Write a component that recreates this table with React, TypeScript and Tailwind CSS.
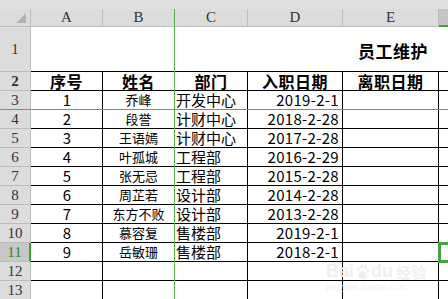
import React from 'react';

type Emp = { no: string; name: string; dept: string; date: string };

const rows: Emp[] = [
  { no: '1', name: '乔峰', dept: '开发中心', date: '2019-2-1' },
  { no: '2', name: '段誉', dept: '计财中心', date: '2018-2-28' },
  { no: '3', name: '王语嫣', dept: '计财中心', date: '2017-2-28' },
  { no: '4', name: '叶孤城', dept: '工程部', date: '2016-2-29' },
  { no: '5', name: '张无忌', dept: '工程部', date: '2015-2-28' },
  { no: '6', name: '周芷若', dept: '设计部', date: '2014-2-28' },
  { no: '7', name: '东方不败', dept: '设计部', date: '2013-2-28' },
  { no: '8', name: '慕容复', dept: '售楼部', date: '2019-2-1' },
  { no: '9', name: '岳敏珊', dept: '售楼部', date: '2018-2-1' },
];

const grid = 'grid grid-cols-[31px_72px_72px_73px_95px_96px_1fr]';
const cjk = "font-['Noto_Sans_CJK_SC',sans-serif]";
const cell = 'border-r border-b border-black overflow-hidden whitespace-nowrap';

const RowHead = ({ n, active = false }: { n: number; active?: boolean }) => (
  <div
    className={`flex items-center justify-center font-['Liberation_Serif',serif] text-[15px] leading-none border-b border-[#bdbdbd] ${
      active
        ? 'bg-[#c8c8c8] text-[#1f8a1f] border-r-2 border-r-[#3f9f3f]'
        : 'bg-[#dcdcdc] text-[#333] border-r border-r-[#bdbdbd]'
    }`}
  >
    {n}
  </div>
);

export default function App() {
  return (
    <div className="relative w-[448px] h-[299px] overflow-hidden bg-white">
      {/* strip above headers */}
      <div className="h-[9px] bg-[#e0e0e0]" />

      {/* column headers */}
      <div className={`${grid} h-[18px] font-['Liberation_Serif',serif] text-[15px] text-[#333] leading-none`}>
        <div className="relative bg-[#dcdcdc] border-r border-b border-[#bdbdbd]">
          <div className="absolute right-[4px] bottom-[3px] w-0 h-0 border-l-[10px] border-l-transparent border-b-[10px] border-b-[#b2b2b2]" />
        </div>
        {['A', 'B', 'C', 'D', 'E'].map((c) => (
          <div key={c} className="flex items-center justify-center bg-[#dcdcdc] border-r border-b border-[#bdbdbd]">
            {c}
          </div>
        ))}
        <div className="bg-[#c6c6c6] border-b-2 border-[#3f9f3f]" />
      </div>

      {/* row 1: title */}
      <div className={`${grid} h-[45px]`}>
        <RowHead n={1} />
        <div className="col-span-6 flex items-center justify-end pr-[20px] pt-[3px] border-b border-black">
          <span className={`${cjk} font-bold text-[17px] text-black tracking-[0.5px]`}>员工维护</span>
        </div>
      </div>

      {/* row 2: column titles */}
      <div className={`${grid} h-[19px] ${cjk} font-bold text-[16px] leading-[18px] text-black`}>
        <RowHead n={2} />
        {['序号', '姓名', '部门', '入职日期', '离职日期'].map((t) => (
          <div key={t} className={`${cell} flex items-end justify-center tracking-[0.5px]`}>
            {t}
          </div>
        ))}
        <div className="border-b border-black" />
      </div>

      {/* data rows */}
      {rows.map((r, i) => (
        <div key={r.no} className={`${grid} h-[19px] ${cjk} leading-[18px] text-black`}>
          <RowHead n={i + 3} active={i + 3 === 11} />
          <div className={`${cell} flex items-end justify-center text-[15px] pl-[1px]`}>{r.no}</div>
          <div className={`${cell} flex items-end justify-center text-[13px]`}>{r.name}</div>
          <div className={`${cell} flex items-end justify-start pl-[1px] text-[15px]`}>{r.dept}</div>
          <div className={`${cell} flex items-end justify-end pr-[3px] text-[15px] tracking-[0.3px]`}>{r.date}</div>
          <div className={cell} />
          <div className="relative border-b border-black">
            {i + 3 === 11 && (
              <div className="absolute -left-[1px] -top-[1px] w-[14px] h-[21px] border-[3px] border-[#43a343]" />
            )}
          </div>
        </div>
      ))}

      {/* empty rows 12, 13 */}
      {[12, 13].map((n) => (
        <div key={n} className={`${grid} h-[19px]`}>
          <RowHead n={n} />
          <div className={cell} />
          <div className={cell} />
          <div className={cell} />
          <div className={cell} />
          <div className={cell} />
          <div className="border-b border-black" />
        </div>
      ))}

      {/* freeze pane lines */}
      <div className="absolute left-[174px] top-[9px] bottom-0 w-px bg-[#4caf50]" />
      <div className="absolute left-0 right-0 top-[109px] h-px bg-[#4caf50]" />

      {/* watermark */}
      <div className="absolute left-[326px] top-[262px] pointer-events-none select-none text-[#f0f0f0] font-['Liberation_Sans',sans-serif]">
        <div className="flex items-center gap-[1px] text-[18px] font-bold leading-none">
          <span>Bai</span>
          <svg width="15" height="15" viewBox="0 0 18 18" fill="#f0f0f0">
            <ellipse cx="4" cy="6" rx="2" ry="2.6" />
            <ellipse cx="8" cy="3" rx="2" ry="2.6" />
            <ellipse cx="12.5" cy="3.5" rx="2" ry="2.6" />
            <ellipse cx="15.5" cy="8" rx="1.8" ry="2.4" />
            <path d="M9 8c-3 0-6 5-5 8s8 2 10 0 -2-8 -5-8z" />
          </svg>
          <span>du</span>
          <span className={`${cjk} text-[15px] ml-[2px]`}>经验</span>
        </div>
        <div className="text-[9px] leading-none mt-[3px] tracking-[0.5px]">jingyan.baidu.com</div>
      </div>
    </div>
  );
}
